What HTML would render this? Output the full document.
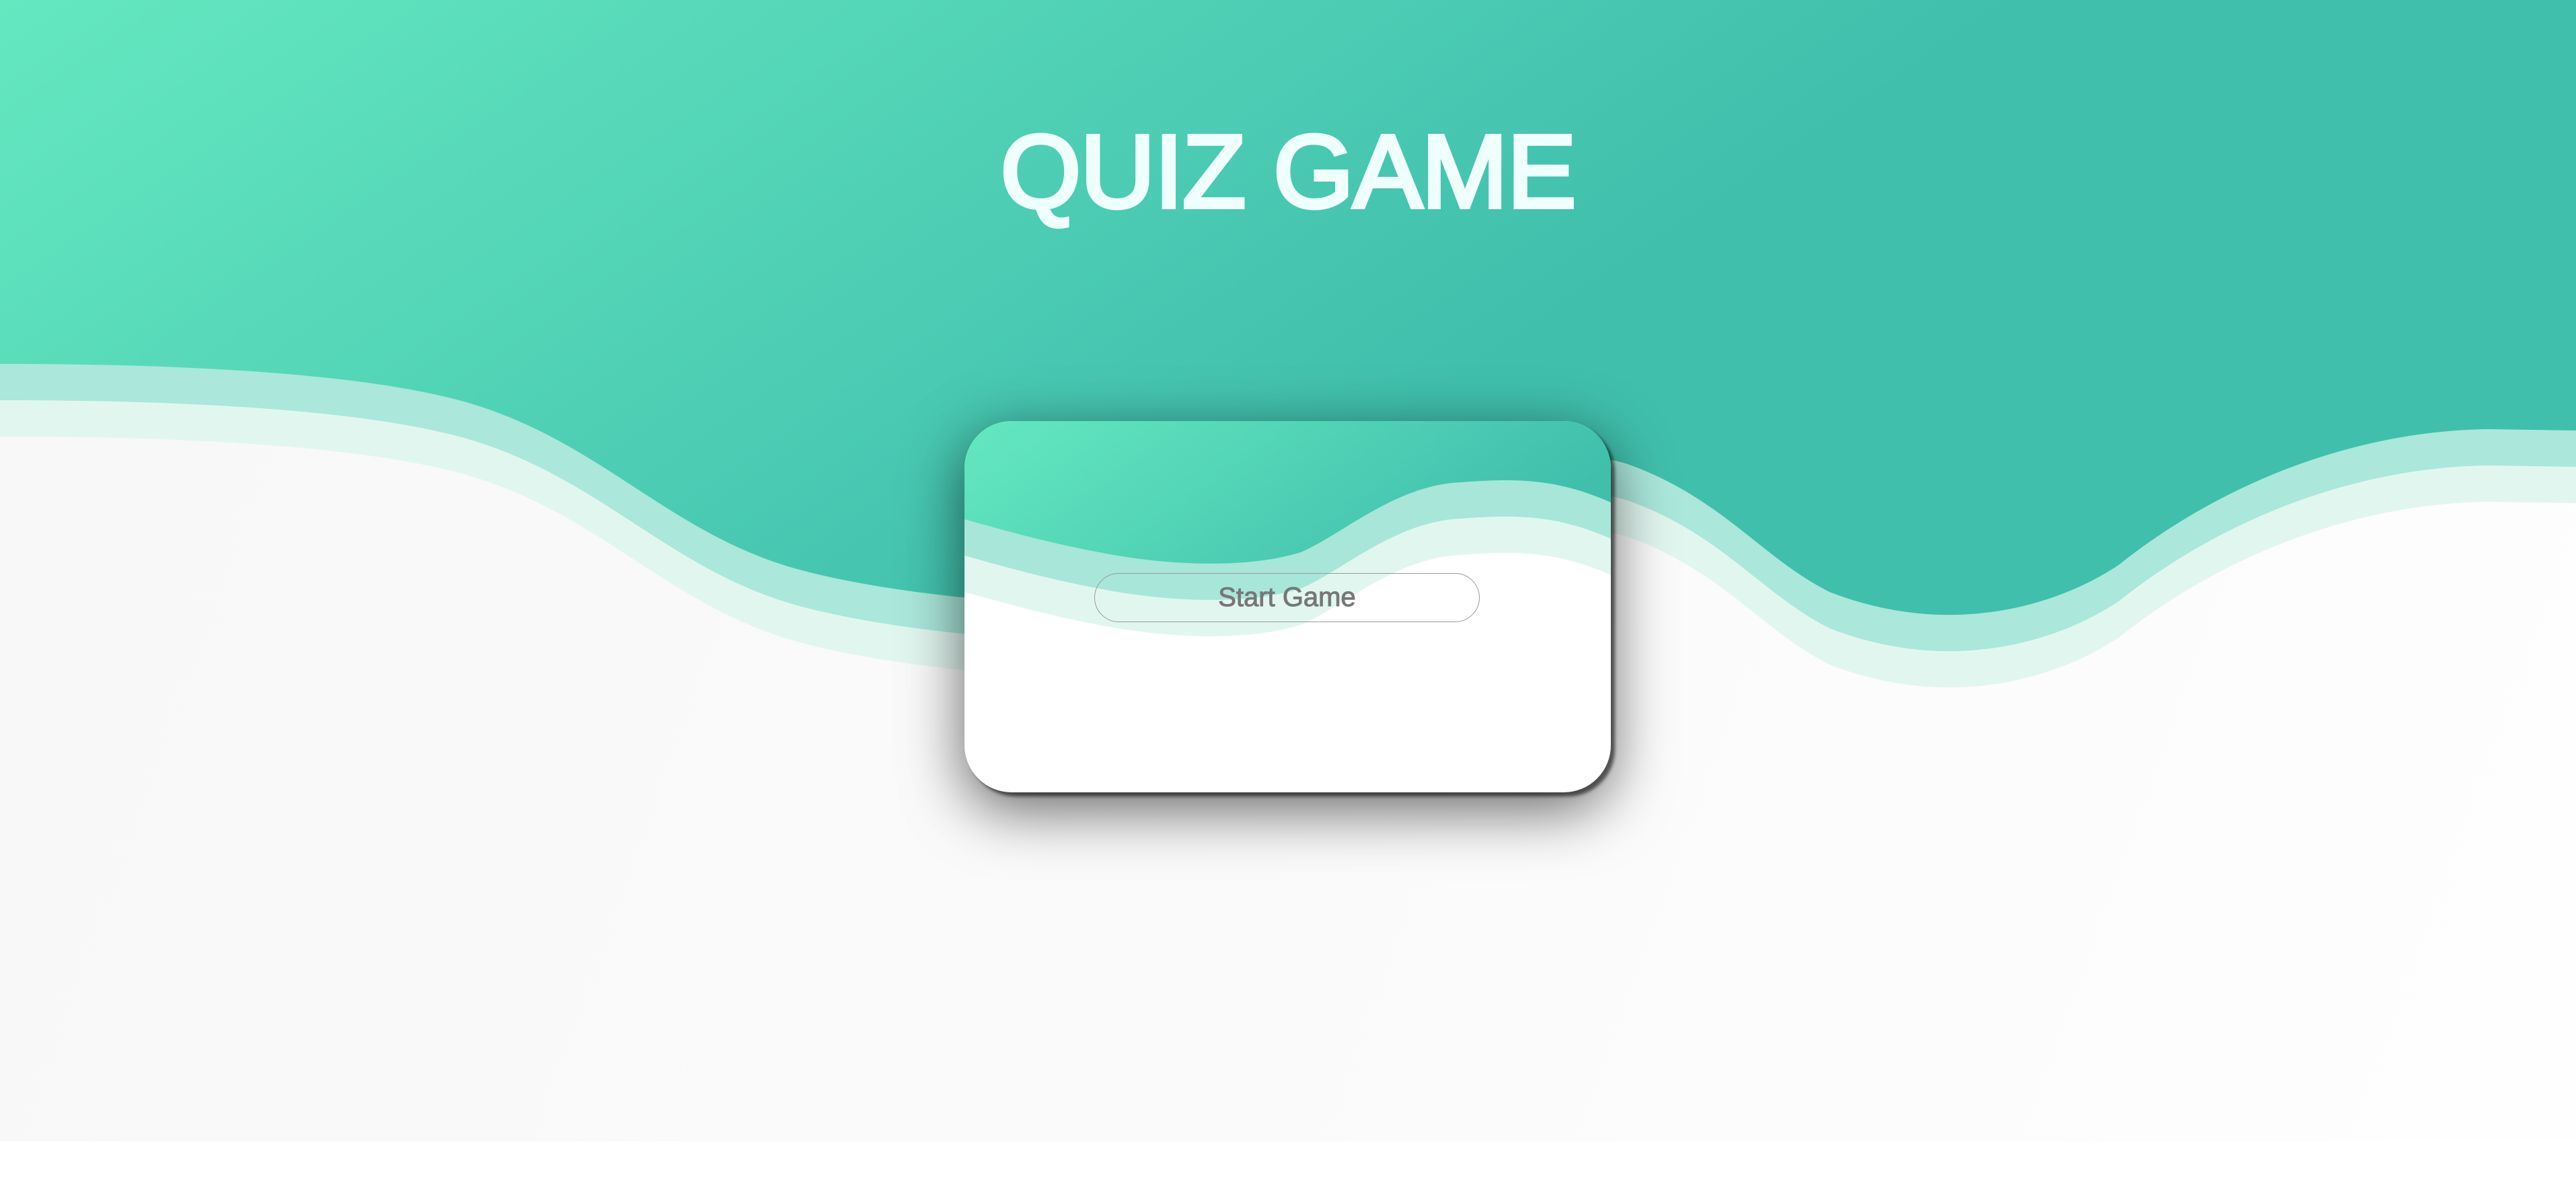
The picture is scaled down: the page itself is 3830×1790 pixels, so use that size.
<!DOCTYPE html>
<html><head><meta charset="utf-8">
<style>
html,body{margin:0;padding:0;width:3830px;height:1790px;overflow:hidden;background:#fff;font-family:"Liberation Sans",sans-serif;}
.bg{position:absolute;left:0;top:0;width:3830px;height:1697px;background:linear-gradient(110deg,#f8f8f8 0%,#fafafa 50%,#fefefe 100%);}
svg.waves{position:absolute;left:0;top:0;}
h1{position:absolute;left:0;top:170px;width:3830px;text-align:center;margin:0;font-size:154px;font-weight:normal;-webkit-text-stroke:6px #effffc;color:#effffc;letter-spacing:-1px;line-height:170px;}
.card{position:absolute;left:1434px;top:626px;width:961px;height:552px;border-radius:70px;background:#fff;overflow:hidden;box-shadow:6px 6px 5px rgba(0,0,0,.55),0 25px 90px rgba(0,0,0,.6);}
.card svg{position:absolute;left:0;top:0;}
.btn{position:absolute;left:193px;top:226px;width:573px;height:73px;border:1.5px solid #999;border-radius:40px;box-sizing:border-box;text-align:center;line-height:70px;font-size:40px;color:#777;-webkit-text-stroke:1px #777;}
</style></head><body>
<div class="bg"></div>
<svg class="waves" width="3830" height="1790" viewBox="0 0 3830 1790">
<defs><linearGradient id="g" x1="0" y1="0" x2="1" y2="0.35"><stop offset="0" stop-color="#64e8c0"/><stop offset="0.7" stop-color="#40bfad"/><stop offset="1" stop-color="#40bfad"/></linearGradient></defs>
<path transform="translate(0,108)" fill="#e2f6f0" d="M0,541 C400,541 600,570 700,600 C900,660 1000,800 1200,850 C1300,875 1400,885 1450,890 C1900,900 2200,620 2420,690 C2560,740 2620,830 2720,880 C2900,950 3060,900 3150,840 C3300,720 3500,640 3700,638 L3830,640 L3830,0 L0,0 Z"/>
<path transform="translate(0,54)" fill="#a8e6d9" d="M0,541 C400,541 600,570 700,600 C900,660 1000,800 1200,850 C1300,875 1400,885 1450,890 C1900,900 2200,620 2420,690 C2560,740 2620,830 2720,880 C2900,950 3060,900 3150,840 C3300,720 3500,640 3700,638 L3830,640 L3830,0 L0,0 Z" opacity="0.95"/>
<path fill="url(#g)" d="M0,541 C400,541 600,570 700,600 C900,660 1000,800 1200,850 C1300,875 1400,885 1450,890 C1900,900 2200,620 2420,690 C2560,740 2620,830 2720,880 C2900,950 3060,900 3150,840 C3300,720 3500,640 3700,638 L3830,640 L3830,0 L0,0 Z"/>
</svg>
<h1>QUIZ GAME</h1>
<div class="card">
<svg width="961" height="552" viewBox="0 0 961 552">
<defs><linearGradient id="cg" x1="0" y1="0" x2="1" y2="0.3"><stop offset="0" stop-color="#64e8c0"/><stop offset="1" stop-color="#40bfad"/></linearGradient></defs>
<path transform="translate(0,108)" fill="#e2f6f0" d="M0,0 H961 V121 C880,85 820,85 738,91 C640,95 560,170 500,195 C420,220 300,215 200,195 C120,180 50,160 0,146 Z"/>
<path transform="translate(0,54)" fill="#a8e6d9" d="M0,0 H961 V121 C880,85 820,85 738,91 C640,95 560,170 500,195 C420,220 300,215 200,195 C120,180 50,160 0,146 Z"/>
<path fill="url(#cg)" d="M0,0 H961 V121 C880,85 820,85 738,91 C640,95 560,170 500,195 C420,220 300,215 200,195 C120,180 50,160 0,146 Z"/>
</svg>
<div class="btn">Start Game</div>
</div>
</body></html>
